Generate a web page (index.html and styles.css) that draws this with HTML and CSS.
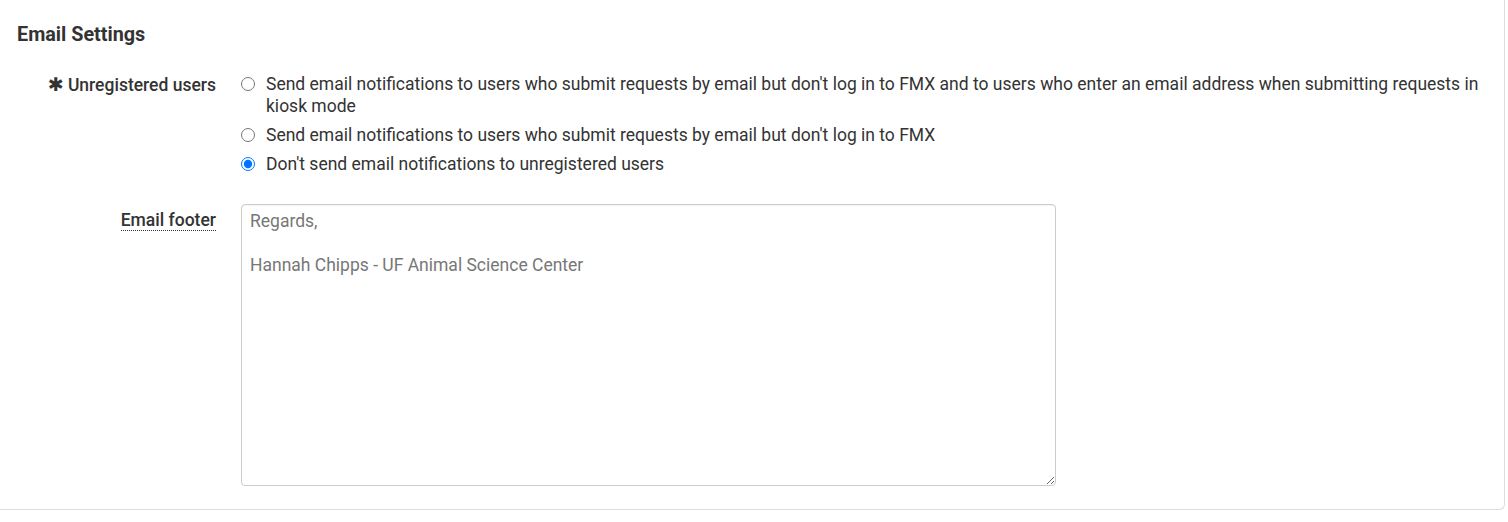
FILE: index.html
```html
<!DOCTYPE html>
<html lang="en">
<head>
  <meta charset="UTF-8" />
  <meta name="viewport" content="width=device-width, initial-scale=1.0"/>
  <title>Email Settings</title>
  <link rel="stylesheet" href="styles.css">
</head>
<body>
  <div class="card">
    <h2 class="card-title">Email Settings</h2>

    <div class="form-row">
      <label class="form-label required">Unregistered users</label>
      <div class="options">
        <label class="option">
          <input type="radio" name="unregistered" value="all">
          <span>Send email notifications to users who submit requests by email but don't log in to FMX and to users who enter an email address when submitting requests in kiosk mode</span>
        </label>
        <label class="option">
          <input type="radio" name="unregistered" value="email">
          <span>Send email notifications to users who submit requests by email but don't log in to FMX</span>
        </label>
        <label class="option">
          <input type="radio" name="unregistered" value="none" checked>
          <span>Don't send email notifications to unregistered users</span>
        </label>
      </div>
    </div>

    <div class="form-row footer-row">
      <label class="form-label footer-label"><span class="hint">Email footer</span></label>
      <div>
        <textarea class="footer-text">Regards,

Hannah Chipps - UF Animal Science Center</textarea>
      </div>
    </div>
  </div>
</body>
</html>
```

FILE: styles.css
```css
body {
  margin: 0;
  background: #fff;
  font-family: Roboto, "Liberation Sans", sans-serif;
  font-size: 17.5px;
  line-height: 22px;
  color: #333;
}

.card {
  box-sizing: border-box;
  width: 1505px;
  padding: 22px 0 23px 17px;
  border-right: 1px solid #ddd;
  border-bottom: 1px solid #ddd;
  border-bottom-right-radius: 6px;
}

.card-title {
  margin: 0 0 25px;
  font-size: 19.8px;
  line-height: 26px;
  font-weight: 700;
  color: #333;
}

.form-row {
  display: grid;
  grid-template-columns: 199px 1fr;
  column-gap: 25px;
}

.footer-row {
  margin-top: 29px;
}

.form-label {
  text-align: right;
  font-weight: 500;
  color: #333;
}

.footer-label {
  padding-top: 5px;
}

.form-label.required::before {
  content: "\2731";
  font-family: "DejaVu Sans", sans-serif;
  font-size: 19px;
  margin-right: 4px;
}

.hint {
  border-bottom: 1px dotted #333;
}

.options {
  display: flex;
  flex-direction: column;
  gap: 7px;
  padding-right: 8px;
}

.option {
  display: flex;
  align-items: flex-start;
}

.option input {
  width: 14px;
  height: 14px;
  margin: 4px 11px 0 0;
  flex-shrink: 0;
}

.footer-text {
  display: block;
  box-sizing: border-box;
  width: 815px;
  height: 282px;
  padding: 5px 8px;
  border: 1px solid #ccc;
  border-radius: 4px;
  font-family: inherit;
  font-size: 17.5px;
  line-height: 22px;
  color: #777;
  box-shadow: inset 0 1px 1px rgba(0,0,0,0.05);
}
```
